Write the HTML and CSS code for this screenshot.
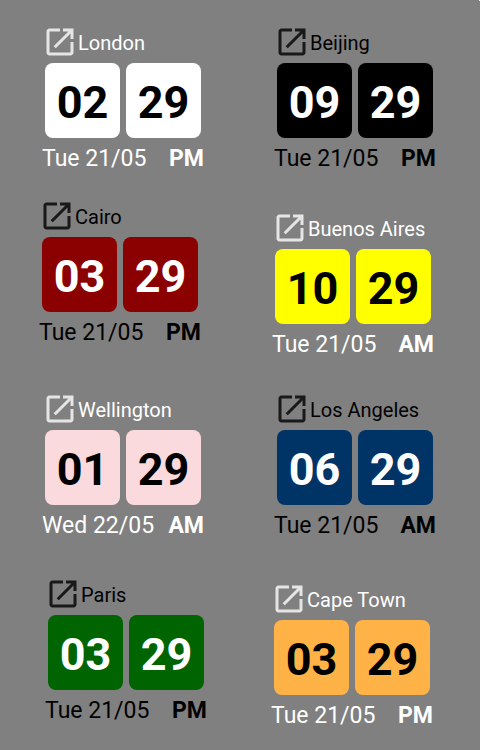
FILE: index.html
```html
<!DOCTYPE html>
<html lang="en">
<head>
    <meta charset="UTF-8">
    <title>World Clock</title>
    <link rel="stylesheet" href="styles.css">
</head>
<body>
    <svg class="sprite">
        <symbol id="open" viewBox="0 0 24 24">
            <path d="M19 19H5V5h7V3H5c-1.11 0-2 .9-2 2v14c0 1.1.89 2 2 2h14c1.1 0 2-.9 2-2v-7h-2v7zM14 3v2h3.59l-9.83 9.83 1.41 1.41L19 6.41V10h2V3h-7z"/>
        </symbol>
    </svg>
    <main>
        <div class="column">
            <section class="clock light london">
                <header><svg><use href="#open"/></svg><h2>London</h2></header>
                <div class="time"><span>02</span><span>29</span></div>
                <footer><span>Tue 21/05</span><b>PM</b></footer>
            </section>
            <section class="clock dark cairo">
                <header><svg><use href="#open"/></svg><h2>Cairo</h2></header>
                <div class="time"><span>03</span><span>29</span></div>
                <footer><span>Tue 21/05</span><b>PM</b></footer>
            </section>
            <section class="clock light wellington">
                <header><svg><use href="#open"/></svg><h2>Wellington</h2></header>
                <div class="time"><span>01</span><span>29</span></div>
                <footer><span>Wed 22/05</span><b>AM</b></footer>
            </section>
            <section class="clock dark paris">
                <header><svg><use href="#open"/></svg><h2>Paris</h2></header>
                <div class="time"><span>03</span><span>29</span></div>
                <footer><span>Tue 21/05</span><b>PM</b></footer>
            </section>
        </div>
        <div class="column">
            <section class="clock dark beijing">
                <header><svg><use href="#open"/></svg><h2>Beijing</h2></header>
                <div class="time"><span>09</span><span>29</span></div>
                <footer><span>Tue 21/05</span><b>PM</b></footer>
            </section>
            <section class="clock light buenos-aires">
                <header><svg><use href="#open"/></svg><h2>Buenos Aires</h2></header>
                <div class="time"><span>10</span><span>29</span></div>
                <footer><span>Tue 21/05</span><b>AM</b></footer>
            </section>
            <section class="clock dark los-angeles">
                <header><svg><use href="#open"/></svg><h2>Los Angeles</h2></header>
                <div class="time"><span>06</span><span>29</span></div>
                <footer><span>Tue 21/05</span><b>AM</b></footer>
            </section>
            <section class="clock light cape-town">
                <header><svg><use href="#open"/></svg><h2>Cape Town</h2></header>
                <div class="time"><span>03</span><span>29</span></div>
                <footer><span>Tue 21/05</span><b>PM</b></footer>
            </section>
        </div>
    </main>
</body>
</html>
```

FILE: styles.css
```css
* {
    padding: 0;
    margin: 0;
    box-sizing: border-box;
}

body {
    background: #808080;
    font-family: Roboto, sans-serif;
}

.sprite {
    display: none;
}

main {
    display: grid;
    grid-template-columns: 232px 248px;
    height: 750px;
    overflow: hidden;
    /* light dot in the top right corner */
    background: linear-gradient(#fff, #fff) top right / 1px 1px no-repeat;
}

.column {
    display: flex;
    flex-direction: column;
    padding-top: 24px;
}

.clock {
    width: 162px;
    height: 150px;
    flex: none;
}

.clock header {
    display: flex;
    align-items: center;
    height: 39px;
}

.clock svg {
    width: 36px;
    height: 36px;
    margin-top: -3px;
    flex: none;
    fill: currentColor;
    opacity: .8;
}

.clock h2 {
    font-size: 20px;
    font-weight: 400;
    line-height: 24px;
    padding-bottom: 2px;
    white-space: nowrap;
}

.time {
    display: flex;
    gap: 6px;
    padding-left: 3px;
}

.time span {
    width: 75px;
    height: 75px;
    border-radius: 8px;
    text-align: center;
    font-size: 45px;
    font-weight: 700;
    line-height: 79px;
}

.clock footer {
    display: flex;
    justify-content: space-between;
    font-size: 23px;
    line-height: 28px;
    padding-top: 7px;
}

/* label colours */
.light {
    color: #fff;
}

.dark {
    color: #000;
}

.light .time {
    color: #000;
}

.dark .time {
    color: #fff;
}

/* cities */
.london {
    margin-left: 42px;
}

.london .time span {
    background: #fff;
}

.cairo {
    margin: 24px 0 0 39px;
}

.cairo .time span {
    background: #8b0000;
}

.wellington {
    margin: 43px 0 0 42px;
}

.wellington .time span {
    background: #fadadd;
}

.paris {
    margin: 35px 0 0 45px;
}

.paris .time span {
    background: #006400;
}

.beijing {
    margin-left: 42px;
}

.beijing .time span {
    background: #000;
}

.buenos-aires {
    margin: 36px 0 0 40px;
}

.buenos-aires .time span {
    background: #ff0;
}

.los-angeles {
    margin: 31px 0 0 42px;
}

.los-angeles .time span {
    background: #003366;
}

.cape-town {
    margin: 40px 0 0 39px;
}

.cape-town .time span {
    background: #ffb347;
}
```
